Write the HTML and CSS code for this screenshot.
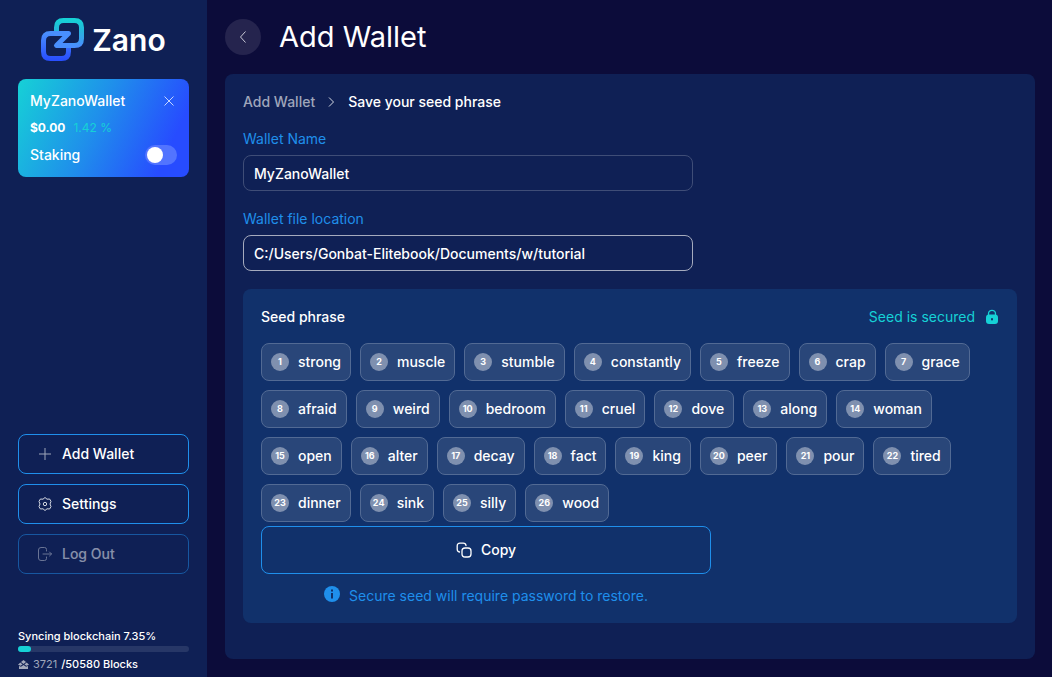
FILE: index.html
```html
<!DOCTYPE html>
<html lang="en">
  <head>
    <meta charset="UTF-8" />
    <meta name="viewport" content="width=device-width, initial-scale=1.0" />
    <title>Zano</title>
    <link rel="stylesheet" href="styles.css">
  </head>
  <body>
    <aside class="sidebar">
      <div class="logo">
        <svg width="43" height="43" viewBox="0 0 43 43" fill="none" stroke-width="5" stroke-linejoin="round" stroke-linecap="round">
          <defs>
            <linearGradient id="logoTop" gradientUnits="userSpaceOnUse" x1="0" y1="2" x2="0" y2="28">
              <stop offset="0" stop-color="#16d1d6" />
              <stop offset="0.4" stop-color="#25b6dc" />
              <stop offset="1" stop-color="#498ffe" />
            </linearGradient>
            <linearGradient id="logoBottom" gradientUnits="userSpaceOnUse" x1="0" y1="15" x2="0" y2="41">
              <stop offset="0" stop-color="#498ffe" />
              <stop offset="1" stop-color="#2950ff" />
            </linearGradient>
          </defs>
          <path stroke="url(#logoTop)" stroke-linecap="butt" d="M15.500 13V9.500q0-7 7-7H33.500q7 0 7 7V20.500q0 7-7 7H15.500" />
          <path stroke="url(#logoBottom)" stroke-linecap="butt" d="M27.500 30V33.500q0 7-7 7H9.500q-7 0-7-7V22.500q0-7 7-7H27.500" />
          <path stroke="#498ffe" d="M15 15.500H27.500L15.500 27.500H28" />
        </svg>
        <span class="logo-text">Zano</span>
      </div>

      <section class="wallet">
        <div class="wallet-row">
          <span>MyZanoWallet</span>
          <button class="close" aria-label="Close wallet">
            <svg width="12" height="12" viewBox="0 0 12 12" stroke="#c5d5ff" fill="none"><path d="M1.500 1.500l9 9M10.500 1.500l-9 9" /></svg>
          </button>
        </div>
        <div class="balance"><b>$0.00</b><span class="change">1.42 %</span></div>
        <div class="wallet-row">
          <label for="staking">Staking</label>
          <input class="switch" type="checkbox" id="staking" />
        </div>
      </section>

      <nav class="menu">
        <button class="menu-button">
          <svg width="16" height="16" viewBox="0 0 16 16" stroke="#9fa6ba" fill="none"><path d="M8 2v12M2 8h12" /></svg>
          Add Wallet
        </button>
        <button class="menu-button">
          <svg width="16" height="16" viewBox="0 0 16 16" stroke="#d3d7e1" fill="none" stroke-linejoin="round"><path d="M8 1.500L10 3.200 12.600 3 14 5.400 13 8l1 2.600L12.600 13 10 12.800 8 14.500 6 12.800 3.400 13 2 10.600 3 8 2 5.400 3.400 3 6 3.200z" /><circle cx="8" cy="8" r="1.700" /></svg>
          Settings
        </button>
        <button class="menu-button" disabled>
          <svg width="16" height="16" viewBox="0 0 16 16" stroke="#c3c8d5" fill="none" stroke-linecap="round" stroke-linejoin="round"><path d="M9.500 5V3.500q0-2-2-2H4q-2.500 0-2.500 2.500v8q0 2.500 2.500 2.500h3.500q2 0 2-2V11M6 8h8.500M12.500 6l2 2-2 2" /></svg>
          Log Out
        </button>
      </nav>

      <div class="sync">
        <label for="progress">Syncing blockchain 7.35%</label>
        <progress id="progress" max="100" value="7.35"></progress>
        <div class="blocks">
          <svg width="11" height="9" viewBox="0 0 11 9" fill="#a3a9bc"><path d="M5.500 0l2.500 2-2.500 2L3 2zM2.300 2.600L4.600 4.500 2.500 5.800 0 4.800zM8.700 2.600L11 4.800 8.500 5.800 6.400 4.500zM1 6l2 .8L5.500 5 8 6.800l2-.8V9H1z" /></svg>
          <span class="current">3721</span><span>/50580 Blocks</span>
        </div>
      </div>
    </aside>

    <main class="content">
      <header class="header">
        <button class="back" aria-label="Back">
          <svg width="16" height="16" viewBox="0 0 16 16" stroke="#c9c9d6" fill="none"><path d="M10.500 2.500L5.500 8l5 5.500" /></svg>
        </button>
        <h1>Add Wallet</h1>
      </header>

      <div class="panel">
        <div class="breadcrumbs">
          <a href="#">Add Wallet</a>
          <svg width="7" height="12" viewBox="0 0 7 12" stroke="#d5d9e3" fill="none"><path d="M1 1.500L5.500 6 1 10.500" /></svg>
          <span>Save your seed phrase</span>
        </div>

        <form class="form">
          <div class="field">
            <label for="walletName">Wallet Name</label>
            <input id="walletName" type="text" value="MyZanoWallet" />
          </div>
          <div class="field">
            <label for="walletLocation">Wallet file location</label>
            <input id="walletLocation" class="active" type="text" value="C:/Users/Gonbat-Elitebook/Documents/w/tutorial" />
          </div>
        </form>

        <section class="seed">
          <div class="seed-header">
            <h2>Seed phrase</h2>
            <span class="secured">
              Seed is secured
              <svg width="14" height="16" viewBox="0 0 14 16"><path fill="none" stroke="#16d1d6" stroke-width="1.300" d="M3.500 7V4.800a3.500 3.500 0 0 1 7 0V7" /><rect x="1" y="5.500" width="12" height="9.500" rx="3" fill="#16d1d6" /><rect x="6" y="9" width="2" height="2.500" rx="1" fill="#11316b" /></svg>
            </span>
          </div>
          <ol class="words" id="words"></ol>
          <button class="copy">
            <svg width="16" height="16" viewBox="0 0 16 16" stroke="#fff" stroke-width="1.300" fill="none" stroke-linecap="round"><rect x="6" y="6" width="9" height="9" rx="3" /><path d="M3.500 10Q1.200 9.700 1.200 7.300V4q0-2.800 2.800-2.800h3.300q2.400 0 2.700 2.300" /></svg>
            Copy
          </button>
          <p class="note">
            <svg width="16" height="16" viewBox="0 0 16 16"><circle cx="8" cy="8" r="8" fill="#1f8feb" /><path d="M7 3.500h2v2H7zM7 7h2v5.500H7z" fill="#11316b" /></svg>
            Secure seed will require password to restore.
          </p>
        </section>
      </div>
    </main>

    <script>
      let seed = 'strong muscle stumble constantly freeze crap grace afraid weird bedroom cruel dove along woman open alter decay fact king peer pour tired dinner sink silly wood'

      function showWords() {
        let list = document.getElementById('words')

        seed.split(' ').forEach((word, i) => {
          let item = document.createElement('li')
          item.innerHTML = `<span class="number">${i + 1}</span>${word}`
          list.appendChild(item)
        })
      }

      showWords()
    </script>
  </body>
</html>
```
FILE: styles.css
```css
* {
  box-sizing: border-box;
}
body {
  margin: 0;
  min-height: 100vh;
  display: flex;
  background: #0c0c3a;
  color: #fff;
  font-family: Inter, "Liberation Sans", sans-serif;
  font-size: 14px;
  line-height: 20px;
}
button,
input {
  font: inherit;
  color: inherit;
}
button {
  cursor: pointer;
}
svg {
  flex-shrink: 0;
}
h1,
h2,
p,
ol {
  margin: 0;
  padding: 0;
}

.sidebar {
  flex: 0 0 207px;
  display: flex;
  flex-direction: column;
  padding: 18px 18px 3px;
  background: #0f2055;
}
.logo {
  display: flex;
  align-items: center;
  justify-content: center;
  gap: 8px;
}
.logo-text {
  font-size: 30px;
  font-weight: 600;
}
.wallet {
  display: flex;
  flex-direction: column;
  gap: 7px;
  margin-top: 18px;
  padding: 12px;
  border-radius: 8px;
  background: linear-gradient(115deg, #16d1d6 0%, #1f8feb 45%, #274cff 85%);
  font-weight: 500;
}
.wallet-row {
  display: flex;
  justify-content: space-between;
  align-items: center;
}
.close {
  display: flex;
  margin-right: 2px;
  padding: 0;
  border: 0;
  background: none;
}
.balance {
  display: flex;
  gap: 8px;
  font-size: 12px;
}
.change {
  color: #16d1d6;
  font-weight: 400;
}
.switch {
  appearance: none;
  width: 32px;
  height: 20px;
  margin: 0;
  border-radius: 10px;
  background: #5274ff;
}
.switch::before {
  content: "";
  display: block;
  width: 16px;
  height: 16px;
  margin: 2px;
  border-radius: 50%;
  background: #fff;
}
.switch:checked::before {
  margin-left: 14px;
}

.menu {
  display: flex;
  flex-direction: column;
  gap: 10px;
  margin-top: auto;
}
.menu-button {
  display: flex;
  align-items: center;
  gap: 9px;
  height: 40px;
  padding: 0 18px;
  border: 1px solid #1f8feb;
  border-radius: 8px;
  background: none;
  font-weight: 500;
}
.menu-button:disabled {
  opacity: 0.5;
  cursor: default;
}
.sync {
  display: flex;
  flex-direction: column;
  margin-top: 52px;
  font-size: 11px;
  font-weight: 500;
}
progress {
  appearance: none;
  width: 100%;
  height: 6px;
  margin-bottom: 2px;
  border: 0;
}
progress::-webkit-progress-bar {
  border-radius: 3px;
  background: #273767;
}
progress::-webkit-progress-value {
  border-radius: 3px;
  background: #16d1d6;
}
.blocks {
  display: flex;
  align-items: center;
  gap: 4px;
}
.current {
  color: #9fa6bb;
  font-weight: 400;
}

.content {
  flex: 1;
  display: flex;
  flex-direction: column;
  padding: 19px 17px 18px 18px;
}
.header {
  display: flex;
  align-items: center;
  gap: 18px;
}
.header h1 {
  font-size: 29px;
  font-weight: 400;
  line-height: 36px;
}
.back {
  display: flex;
  align-items: center;
  justify-content: center;
  width: 36px;
  height: 36px;
  padding: 0;
  border: 0;
  border-radius: 50%;
  background: #25244e;
}
.panel {
  flex: 1;
  margin-top: 19px;
  padding: 18px;
  border-radius: 8px;
  background: #0f2055;
}
.breadcrumbs {
  display: flex;
  align-items: center;
  gap: 13px;
  font-weight: 500;
}
.breadcrumbs a {
  color: #9fa6bb;
  text-decoration: none;
}
.form {
  display: flex;
  flex-direction: column;
  gap: 18px;
  max-width: 450px;
  margin-top: 17px;
}
.field {
  display: flex;
  flex-direction: column;
  gap: 6px;
}
.field label {
  color: #1f8feb;
}
.field input {
  height: 36px;
  padding: 0 10px;
  border: 1px solid #3f4d77;
  border-radius: 8px;
  outline: 0;
  background: none;
  font-weight: 500;
}
.field input.active {
  border-color: #a5abbe;
}

.seed {
  margin-top: 18px;
  padding: 18px 18px 17px;
  border-radius: 8px;
  background: #11316b;
}
.seed-header {
  display: flex;
  justify-content: space-between;
}
.seed-header h2 {
  font-size: 14px;
  font-weight: 500;
}
.secured {
  display: flex;
  align-items: center;
  gap: 10px;
  color: #16d1d6;
}
.words {
  display: flex;
  flex-wrap: wrap;
  gap: 9px;
  margin-top: 16px;
  list-style: none;
}
.words li {
  display: flex;
  align-items: center;
  gap: 9px;
  height: 38px;
  padding: 0 9px;
  border: 1px solid #526a94;
  border-radius: 8px;
  background: #294679;
  font-weight: 500;
}
.number {
  width: 18px;
  height: 18px;
  border-radius: 50%;
  background: #7f90af;
  font-size: 9px;
  font-weight: 700;
  line-height: 18px;
  text-align: center;
}
.copy {
  display: flex;
  align-items: center;
  justify-content: center;
  gap: 9px;
  width: 100%;
  max-width: 450px;
  height: 48px;
  margin-top: 4px;
  border: 1px solid #1f8feb;
  border-radius: 8px;
  background: none;
  font-weight: 500;
}
.note {
  display: flex;
  justify-content: center;
  gap: 9px;
  max-width: 450px;
  margin-top: 12px;
  color: #1f8feb;
}
```
